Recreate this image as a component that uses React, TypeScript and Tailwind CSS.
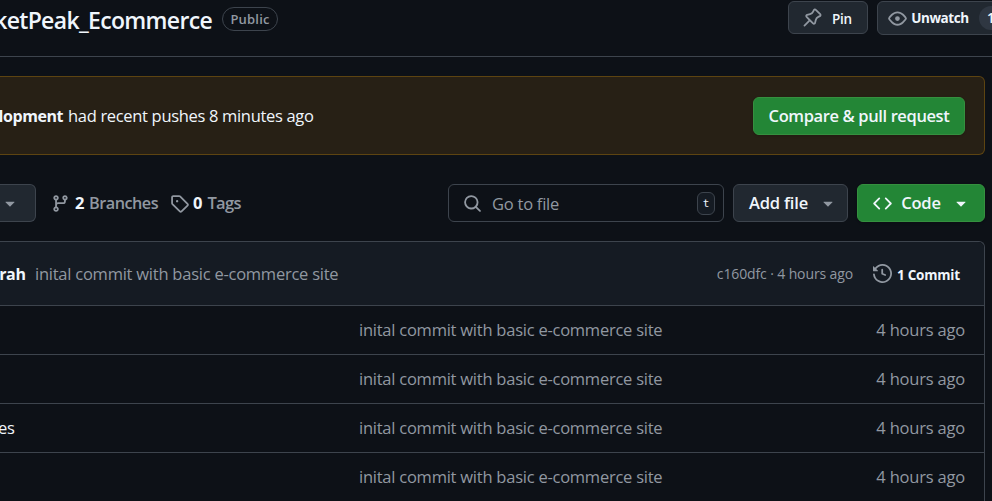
import React from "react";

const ICONS = {
  pin: "m11.294.984 3.722 3.722a1.75 1.75 0 0 1-.504 2.826l-1.327.613a3.089 3.089 0 0 0-1.707 2.084l-.584 2.454c-.317 1.332-1.972 1.8-2.94.832L5.75 11.311 1.78 15.28a.749.749 0 1 1-1.06-1.06l3.969-3.97-2.204-2.204c-.968-.968-.5-2.623.832-2.94l2.454-.584a3.08 3.08 0 0 0 2.084-1.707l.613-1.327a1.75 1.75 0 0 1 2.826-.504ZM6.283 9.723l2.732 2.731a.25.25 0 0 0 .42-.119l.584-2.454a4.586 4.586 0 0 1 2.537-3.098l1.328-.613a.25.25 0 0 0 .072-.404l-3.722-3.722a.25.25 0 0 0-.404.072l-.613 1.328a4.584 4.584 0 0 1-3.098 2.537l-2.454.584a.25.25 0 0 0-.119.42l2.731 2.732Z",
  eye: "M8 2c1.981 0 3.671.992 4.933 2.078 1.27 1.091 2.187 2.345 2.637 3.023a1.62 1.62 0 0 1 0 1.798c-.45.678-1.367 1.932-2.637 3.023C11.67 13.008 9.981 14 8 14c-1.981 0-3.671-.992-4.933-2.078C1.797 10.83.88 9.576.43 8.898a1.62 1.62 0 0 1 0-1.798c.45-.677 1.367-1.931 2.637-3.022C4.33 2.992 6.019 2 8 2ZM1.679 7.932a.12.12 0 0 0 0 .136c.411.622 1.241 1.75 2.366 2.717C5.176 11.758 6.527 12.5 8 12.5c1.473 0 2.825-.742 3.955-1.715 1.124-.967 1.954-2.096 2.366-2.717a.12.12 0 0 0 0-.136c-.412-.621-1.242-1.75-2.366-2.717C10.824 4.242 9.473 3.5 8 3.5c-1.473 0-2.825.742-3.955 1.715-1.124.967-1.954 2.096-2.366 2.717ZM8 10a2 2 0 1 1-.001-3.999A2 2 0 0 1 8 10Z",
  branch: "M9.5 3.25a2.25 2.25 0 1 1 3 2.122V6A2.5 2.5 0 0 1 10 8.5H6a1 1 0 0 0-1 1v1.128a2.251 2.251 0 1 1-1.5 0V5.372a2.25 2.25 0 1 1 1.5 0v1.836A2.493 2.493 0 0 1 6 7h4a1 1 0 0 0 1-1v-.628A2.25 2.25 0 0 1 9.5 3.25Zm-6 0a.75.75 0 1 0 1.5 0 .75.75 0 0 0-1.5 0Zm8.25-.75a.75.75 0 1 0 0 1.5.75.75 0 0 0 0-1.5ZM4.25 12a.75.75 0 1 0 0 1.5.75.75 0 0 0 0-1.5Z",
  tag: "M1 7.775V2.75C1 1.784 1.784 1 2.75 1h5.025c.464 0 .91.184 1.238.513l6.25 6.25a1.75 1.75 0 0 1 0 2.474l-5.026 5.026a1.75 1.75 0 0 1-2.474 0l-6.25-6.25A1.752 1.752 0 0 1 1 7.775Zm1.5 0c0 .066.026.13.073.177l6.25 6.25a.25.25 0 0 0 .354 0l5.025-5.025a.25.25 0 0 0 0-.354l-6.25-6.25a.25.25 0 0 0-.177-.073H2.75a.25.25 0 0 0-.25.25ZM6 5a1 1 0 1 1 0 2 1 1 0 0 1 0-2Z",
  search: "M10.68 11.74a6 6 0 0 1-7.922-8.982 6 6 0 0 1 8.982 7.922l3.04 3.04a.749.749 0 0 1-.326 1.275.749.749 0 0 1-.734-.215ZM11.5 7a4.499 4.499 0 1 0-8.997 0A4.499 4.499 0 0 0 11.5 7Z",
  code: "m11.28 3.22 4.25 4.25a.75.75 0 0 1 0 1.06l-4.25 4.25a.749.749 0 0 1-1.275-.326.749.749 0 0 1 .215-.734L13.94 8l-3.72-3.72a.749.749 0 0 1 .326-1.275.749.749 0 0 1 .734.215Zm-6.56 0a.751.751 0 0 1 1.042.018.751.751 0 0 1 .018 1.042L2.06 8l3.72 3.72a.749.749 0 0 1-.326 1.275.749.749 0 0 1-.734-.215L.47 8.53a.75.75 0 0 1 0-1.06Z",
  history: "m.427 1.927 1.215 1.215a8.002 8.002 0 1 1-1.6 5.685.75.75 0 1 1 1.493-.154 6.5 6.5 0 1 0 1.18-4.458l1.358 1.358A.25.25 0 0 1 3.896 6H.25A.25.25 0 0 1 0 5.75V2.104a.25.25 0 0 1 .427-.177ZM7.75 4a.75.75 0 0 1 .75.75v2.992l2.028.812a.75.75 0 0 1-.557 1.392l-2.5-1A.751.751 0 0 1 7 8.25v-3.5A.75.75 0 0 1 7.75 4Z",
  caret: "m4.427 7.427 3.396 3.396a.25.25 0 0 0 .354 0l3.396-3.396A.25.25 0 0 0 11.396 7H4.604a.25.25 0 0 0-.177.427Z",
};

function Icon({ name, className = "size-5" }: { name: keyof typeof ICONS; className?: string }) {
  return (
    <svg viewBox="0 0 16 16" fill="currentColor" className={`shrink-0 ${className}`}>
      <path d={ICONS[name]} />
    </svg>
  );
}

const MESSAGE = "inital commit with basic e-commerce site";
const FILES = ["", "", "es", ""];

export default function App() {
  return (
    <div className="h-[501px] w-[992px] overflow-hidden whitespace-nowrap bg-[#0d1117] font-['Open_Sans',sans-serif] text-[16.5px] leading-6 tracking-[-0.24px] text-[#f0f6fc]">
      <header className="flex h-[57px] items-start border-b border-[#3d444d]">
        <div className="flex h-[39px] w-[212px] shrink-0 items-center justify-end text-[23px] font-semibold tracking-[-0.67px]">
          ketPeak_Ecommerce
        </div>
        <span className="ml-[10px] mt-[7px] flex h-6 w-14 shrink-0 items-center justify-center rounded-full border border-[#3d444d] text-[13px] font-semibold tracking-[0.2px] text-[#9198a1]">
          Public
        </span>
        <button className="ml-[510px] mt-px flex h-[33px] w-20 shrink-0 items-center rounded-md border border-[#3d444d] bg-[#212830] pl-[14px] text-[13.5px] font-semibold">
          <Icon name="pin" className="size-[19px] text-[#9198a1]" />
          <span className="ml-[10px] mt-[3px]">Pin</span>
        </button>
        <button className="ml-[9px] mt-px flex h-[34px] w-40 shrink-0 items-center rounded-md border border-[#3d444d] bg-[#212830] pl-[10px] text-[13.5px] font-semibold">
          <Icon name="eye" className="size-[19px] text-[#9198a1]" />
          <span className="ml-1 w-[58px] font-bold tracking-[-0.4px]">Unwatch</span>
          <span className="ml-[10px] flex h-6 w-7 items-center rounded-full bg-[#2f3742] pl-2">1</span>
        </button>
      </header>

      <section className="mt-[19px] flex h-[79px] w-[985px] items-center justify-between rounded-r-md border border-l-0 border-[#5d4411] bg-[#272015] pr-[19px]">
        <div className="flex">
          <span className="flex w-[63px] shrink-0 justify-end text-[16px] font-bold tracking-[-0.45px]">lopment</span>
          <span className="ml-[5px] tracking-[-0.32px]">had recent pushes 8 minutes ago</span>
        </div>
        <button className="flex h-[38px] w-[212px] items-center justify-center rounded-md border border-[#35903f] bg-[#238636] font-semibold tracking-[-0.38px] shadow">
          Compare &amp; pull request
        </button>
      </section>

      <nav className="mt-[29px] flex h-[38px] w-[985px] items-center">
        <button className="flex h-[38px] w-9 shrink-0 items-center rounded-r-md border border-l-0 border-[#3d444d] bg-[#212830]">
          <Icon name="caret" className="size-5 text-[#9198a1]" />
        </button>
        <Icon name="branch" className="ml-[15px] size-[19px] text-[#9198a1]" />
        <span className="ml-[5px] w-[14px] font-bold">2</span>
        <span className="w-[70px] text-[16.25px] font-semibold tracking-[-0.5px] text-[#9198a1]">Branches</span>
        <Icon name="tag" className="ml-[11px] size-[19px] text-[#9198a1]" />
        <span className="ml-1 w-[14.5px] font-bold">0</span>
        <span className="font-semibold tracking-[-0.7px] text-[#9198a1]">Tags</span>
        <div className="ml-auto flex h-[38px] w-[276px] shrink-0 items-center rounded-md border border-[#3d444d] pl-[14px] pr-2 text-[#9198a1]">
          <Icon name="search" className="mt-px size-[19px]" />
          <span className="ml-[10px] mt-px">Go to file</span>
          <kbd className="ml-auto mt-px flex h-[23px] w-[18px] items-center justify-center rounded-md border border-[#3d444d] bg-[#151b23] pt-px font-['DejaVu_Sans_Mono',monospace] text-[11px] text-[#f0f6fc]">t</kbd>
        </div>
        <button className="ml-[9px] flex h-[38px] w-[115px] shrink-0 items-center rounded-md border border-[#3d444d] bg-[#212830] pl-[14.5px] font-semibold">
          <span className="w-[60px] tracking-[-0.15px]">Add file</span>
          <Icon name="caret" className="ml-[9px] size-5 text-[#9198a1]" />
        </button>
        <button className="ml-[9px] flex h-[38px] w-[128px] shrink-0 items-center rounded-md border border-[#35903f] bg-[#238636] pl-[15px] font-semibold shadow">
          <Icon name="code" className="size-[19px]" />
          <span className="ml-[9px] w-10">Code</span>
          <Icon name="caret" className="ml-[9.5px] size-5" />
        </button>
      </nav>

      <main className="mt-[19px] w-[985px] rounded-tr-md border-r border-t border-[#3d444d]">
        <div className="flex h-16 items-center rounded-tr-md border-b border-[#3d444d] bg-[#151b23]">
          <span className="flex w-[25.5px] shrink-0 justify-end text-[16px] font-bold tracking-[-0.4px]">rah</span>
          <span className="ml-[9.5px] text-[#9198a1]">{MESSAGE}</span>
          <span className="ml-auto text-[14px] tracking-[-0.12px] text-[#9198a1]">c160dfc · 4 hours ago</span>
          <Icon name="history" className="ml-5 size-[19px] text-[#9198a1]" />
          <span className="ml-[5px] mr-6 mt-[2px] w-[63px] text-[13.5px] font-bold">1 Commit</span>
        </div>
        {FILES.map((name, index) => (
          <div key={index} className="flex h-[49px] items-center border-b border-[#3d444d]">
            <span className="w-[359px] -indent-[2px]">{name}</span>
            <span className="text-[#9198a1]">{MESSAGE}</span>
            <span className="ml-auto mr-[19px] tracking-[-0.2px] text-[#9198a1]">4 hours ago</span>
          </div>
        ))}
      </main>
    </div>
  );
}
